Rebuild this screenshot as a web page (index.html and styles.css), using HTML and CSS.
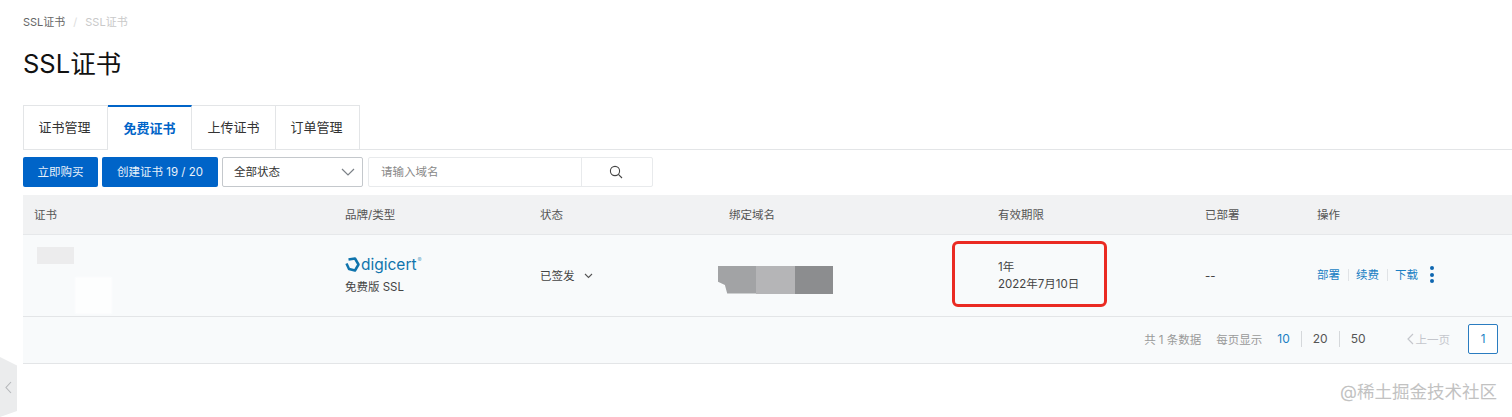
FILE: index.html
```html
<!DOCTYPE html>
<html lang="zh">
<head>
<meta charset="utf-8">
<title>SSL证书</title>
<link rel="stylesheet" href="styles.css">
</head>
<body>
<div class="page">
  <div class="crumbs"><span>SSL证书</span><i>/</i><span class="now">SSL证书</span></div>
  <h1>SSL证书</h1>

  <div class="tabs">
    <div class="tab">证书管理</div>
    <div class="tab active">免费证书</div>
    <div class="tab">上传证书</div>
    <div class="tab">订单管理</div>
  </div>

  <div class="toolbar">
    <button class="btn buy">立即购买</button>
    <button class="btn create">创建证书 19 / 20</button>
    <div class="select">全部状态
      <svg width="14" height="8" viewBox="0 0 14 8"><path d="M1 1l6 6 6-6" fill="none" stroke="#7b8187" stroke-width="1.2"/></svg>
    </div>
    <div class="search">
      <div class="search-input">请输入域名</div>
      <div class="search-btn">
        <svg width="14" height="14" viewBox="0 0 14 14"><circle cx="6" cy="6" r="4.600" fill="none" stroke="#444" stroke-width="1.1"/><path d="M9.400 9.400L13 13" stroke="#444" stroke-width="1.1"/></svg>
      </div>
    </div>
  </div>

  <div class="table">
    <div class="row head">
      <div>证书</div><div>品牌/类型</div><div>状态</div><div>绑定域名</div><div>有效期限</div><div>已部署</div><div>操作</div>
    </div>
    <div class="row body">
      <div class="cert"><div class="smudge"></div><div class="smudge-light"></div></div>
      <div class="brand">
        <div class="logo">
          <svg width="15" height="15" viewBox="0 0 15 15"><path d="M3.500 2.500L10 1.500 13.500 7.500 10 13.500 4 12 1.500 6.500" fill="none" stroke="#0f74ad" stroke-width="2.500" stroke-linejoin="round"/></svg>
          <span>digicert</span><sup>®</sup>
        </div>
        <div>免费版 SSL</div>
      </div>
      <div class="status">已签发
        <svg width="9" height="6" viewBox="0 0 9 6"><path d="M1 1l3.500 3.500L8 1" fill="none" stroke="#555" stroke-width="1.1"/></svg>
      </div>
      <div class="domain"><b class="d1"></b><b class="d2"></b><b class="d3"></b></div>
      <div class="valid">1年<br>2022年7月10日</div>
      <div>--</div>
      <div class="ops">
        <a>部署</a><a>续费</a><a>下载</a>
        <span class="more"><i></i><i></i><i></i></span>
      </div>
    </div>
    <div class="pager">
      <span class="total">共 1 条数据</span>
      <span class="per">每页显示</span>
      <span class="sizes"><a class="on">10</a><a>20</a><a>50</a></span>
      <span class="prev">
        <svg width="7" height="12" viewBox="0 0 7 12"><path d="M6 1L1 6l5 5" fill="none" stroke="#c4c6cc" stroke-width="1.2"/></svg>上一页
      </span>
      <span class="cur">1</span>
    </div>
  </div>
</div>

<div class="redbox"></div>
<div class="side-toggle">
  <svg width="7" height="13" viewBox="0 0 7 13"><path d="M6 1L1 6.500l5 5.500" fill="none" stroke="#b5b7ba" stroke-width="1.1"/></svg>
</div>
<div class="mark">@稀土掘金技术社区</div>
</body>
</html>
```
FILE: styles.css
```css
html, body {padding: 0; margin: 0; background: #fff}
body {
  width: 1512px;
  height: 417px;
  overflow: hidden;
  position: relative;
  font-family: "Inter", "Liberation Sans", "Noto Sans CJK SC", sans-serif;
  font-size: 11.500px;
  color: #333;
}
.page {
  padding: 15px 0 0 23px;
}
.crumbs {
  display: flex;
  gap: 8px;
  height: 15px;
  line-height: 15px;
  font-size: 11px;
  color: #666;
}
.crumbs i {
  font-style: normal;
  color: #ddd;
}
.crumbs .now {
  color: #c9c9c9;
}
h1 {
  margin: 18px 0 0;
  height: 57px;
  font-size: 25.500px;
  line-height: 32px;
  font-weight: 400;
  color: #111;
}
.tabs {
  display: flex;
  height: 45px;
  box-sizing: border-box;
  border-bottom: 1px solid #e3e5e7;
}
.tab {
  width: 84px;
  height: 45px;
  box-sizing: border-box;
  border: 1px solid #e3e5e7;
  border-left-width: 0;
  text-align: center;
  line-height: 43px;
  font-size: 13px;
  color: #333;
  background: #fff;
}
.tab:first-child {
  border-left-width: 1px;
  width: 85px;
  padding-right: 2px;
}
.tab:last-child {
  padding-right: 2px;
}
.tab.active {
  color: #0064c8;
  font-weight: 600;
  border-top: 2px solid #0064c8;
  border-bottom-color: #fff;
  line-height: 42px;
}
.toolbar {
  display: flex;
  align-items: center;
  margin-top: 7px;
  height: 30px;
}
.btn {
  height: 30px;
  border: 0;
  padding: 0 0 2px;
  border-radius: 2px;
  background: #0064c8;
  color: #e8f1fa;
  font: inherit;
}
.buy {
  width: 75px;
  margin-right: 4px;
}
.create {
  width: 116px;
  margin-right: 4px;
}
.select {
  width: 141px;
  height: 30px;
  box-sizing: border-box;
  border: 1px solid #c4c8cc;
  border-radius: 2px;
  padding: 0 7px 2px 11px;
  display: flex;
  align-items: center;
  justify-content: space-between;
  margin-right: 5px;
}
.select svg {
  margin-top: 1px;
}
.search {
  display: flex;
  width: 285px;
  height: 30px;
  box-sizing: border-box;
  border: 1px solid #e8eaec;
  border-radius: 2px;
}
.search-input {
  width: 213px;
  padding-left: 12px;
  box-sizing: border-box;
  line-height: 29px;
  color: #888;
  border-right: 1px solid #e8eaec;
}
.search-btn {
  flex: 1;
  display: flex;
  align-items: center;
  justify-content: center;
  padding-right: 2px;
}
.table {
  margin-top: 8px;
}
.row {
  display: grid;
  grid-template-columns: 310px 195px 189px 269px 207px 112px 1fr;
  align-items: center;
}
.row > div {
  padding-left: 12px;
}
.row > div:first-child {
  padding-left: 11px;
}
.head {
  height: 40px;
  background: #f1f2f3;
  border-bottom: 1px solid #e6e8ea;
  box-sizing: border-box;
  padding-bottom: 2px;
  color: #555;
}
.body {
  height: 82px;
  box-sizing: border-box;
  background: #f8fafb;
  border-bottom: 1px solid #e3e5e7;
  color: #444;
}
.cert {
  align-self: stretch;
  display: flex;
  flex-direction: column;
}
.smudge {
  width: 37px;
  height: 17px;
  margin: 12px 0 0 3px;
  background: #ececed;
}
.smudge-light {
  width: 37px;
  height: 37px;
  margin: 13px 0 0 41px;
  background: #fdfefe;
  filter: blur(1px);
}
.brand {
  line-height: 20px;
}
.logo {
  display: flex;
  align-items: center;
  gap: 1px;
  height: 20px;
  margin-bottom: 2px;
  font-size: 15.500px;
  color: #0f74ad;
}
.logo sup {
  font-size: 6px;
  align-self: flex-start;
  line-height: 10px;
  margin: 0;
  color: #6aa6c8;
}
.status {
  display: flex;
  align-items: center;
  gap: 9px;
  margin-bottom: 2px;
}
.status svg {
  margin-top: 2px;
}
.domain {
  display: flex;
  margin-left: -11px;
  margin-top: 8px;
}
.domain b {
  display: block;
  width: 38.300px;
  height: 28px;
}
.domain .d1 {
  background: #a2a3a5;
  clip-path: polygon(0 0, 100% 0, 100% 100%, 24% 100%, 18% 70%, 0 58%);
}
.domain .d2 {
  background: #b5b5b7;
}
.domain .d3 {
  background: #8c8d8f;
}
.valid {
  line-height: 17px;
}
.ops {
  display: flex;
  align-items: center;
  margin-bottom: 2px;
}
.ops a {
  color: #1a7fc4;
  padding-right: 8px;
  margin-right: 7px;
  border-right: 1px solid #e0e3e6;
  line-height: 12px;
}
.ops a:nth-child(3) {
  border-right: 0;
  margin-right: 4px;
}
.more {
  display: flex;
  flex-direction: column;
  gap: 2.500px;
}
.more i {
  width: 4px;
  height: 4px;
  border-radius: 50%;
  background: #0f66b0;
}
.pager {
  height: 47px;
  box-sizing: border-box;
  background: #f8fafb;
  border-bottom: 1px solid #e3e5e7;
  display: flex;
  align-items: center;
  justify-content: flex-end;
  padding: 0 14px 2px 0;
  color: #999;
  font-size: 11.500px;
}
.per {
  margin-left: 15px;
}
.sizes {
  display: flex;
  margin-left: 15px;
  font-size: 12px;
  color: #555;
}
.sizes a {
  padding: 0 11px;
  border-left: 1px solid #d5d8db;
  line-height: 16px;
}
.sizes a:first-child {
  border-left: 0;
  padding-left: 0;
}
.sizes a:last-child {
  padding-right: 0;
}
.sizes .on {
  color: #1a7fc4;
}
.prev {
  display: flex;
  align-items: center;
  gap: 2px;
  margin-left: 41px;
  color: #c4c6cc;
}
.cur {
  width: 30px;
  height: 30px;
  box-sizing: border-box;
  margin-left: 18px;
  border: 1px solid #2a7cc0;
  border-radius: 2px;
  background: #fff;
  color: #1a7fc4;
  text-align: center;
  line-height: 28px;
}
/* annotation and chrome sitting on top of the page */
.redbox {
  position: absolute;
  left: 952px;
  top: 241px;
  width: 149px;
  height: 60px;
  border: 3px solid #ea2a22;
  border-radius: 6px;
}
.side-toggle {
  position: absolute;
  left: 0;
  top: 357px;
  width: 17px;
  height: 60px;
  background: #ebeced;
  clip-path: polygon(0 0, 100% 14%, 100% 90%, 0 100%);
  display: flex;
  align-items: center;
  padding-left: 5px;
  box-sizing: border-box;
}
.mark {
  position: absolute;
  right: 15px;
  top: 381px;
  font-size: 17.500px;
  line-height: 22px;
  color: #c2c2c2;
}
```
